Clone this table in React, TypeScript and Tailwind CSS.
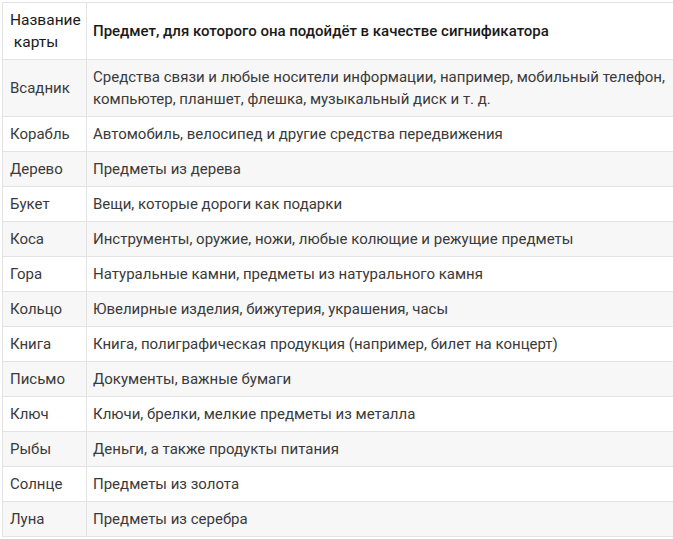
import React from "react";

const rows: [string, string][] = [
  [
    "Всадник",
    "Средства связи и любые носители информации, например, мобильный телефон, компьютер, планшет, флешка, музыкальный диск и т. д.",
  ],
  ["Корабль", "Автомобиль, велосипед и другие средства передвижения"],
  ["Дерево", "Предметы из дерева"],
  ["Букет", "Вещи, которые дороги как подарки"],
  ["Коса", "Инструменты, оружие, ножи, любые колющие и режущие предметы"],
  ["Гора", "Натуральные камни, предметы из натурального камня"],
  ["Кольцо", "Ювелирные изделия, бижутерия, украшения, часы"],
  ["Книга", "Книга, полиграфическая продукция (например, билет на концерт)"],
  ["Письмо", "Документы, важные бумаги"],
  ["Ключ", "Ключи, брелки, мелкие предметы из металла"],
  ["Рыбы", "Деньги, а также продукты питания"],
  ["Солнце", "Предметы из золота"],
  ["Луна", "Предметы из серебра"],
];

export default function App() {
  return (
    <div
      className="w-[673px] h-[539px] overflow-hidden bg-white pt-[2px] pl-[2px]"
      style={{ fontFamily: "Roboto, 'Liberation Sans', sans-serif" }}
    >
      <table className="w-[700px] table-fixed border-collapse text-[15px] leading-[22px] text-[#3a3a3a]">
        <thead>
          <tr>
            <th className="w-[84px] border border-[#e3e3e3] px-[7px] py-[6px] text-left align-middle text-[15.5px] font-normal text-[#1a1a1a]">
              Название
              <br />
              {"\u00a0"}карты
            </th>
            <th className="border border-[#e3e3e3] px-[6px] py-[6px] text-left align-middle font-medium text-[#1a1a1a]">
              Предмет, для которого она подойдёт в качестве сигнификатора
            </th>
          </tr>
        </thead>
        <tbody>
          {rows.map(([card, item], i) => (
            <tr key={card} className={i % 2 === 0 ? "bg-[#f7f7f7]" : "bg-white"}>
              <td className="border border-[#e3e3e3] px-[7px] py-[6px] align-middle">{card}</td>
              <td className="border border-[#e3e3e3] px-[6px] py-[6px] pr-[12px] align-middle">{item}</td>
            </tr>
          ))}
        </tbody>
      </table>
    </div>
  );
}
